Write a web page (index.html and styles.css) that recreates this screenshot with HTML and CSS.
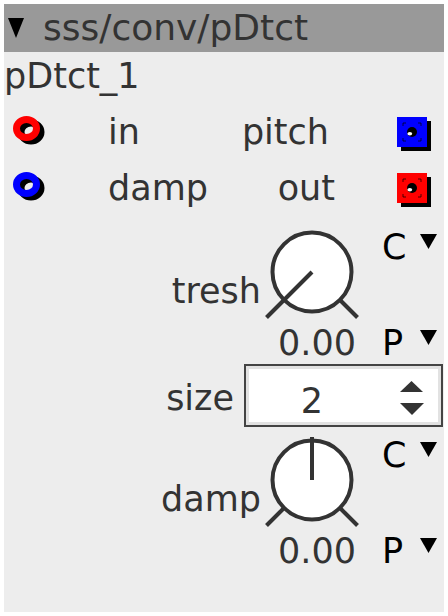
FILE: index.html
```html
<!DOCTYPE html>
<html lang="en">
  <head>
    <meta charset="UTF-8" />
    <title>sss/conv/pDtct</title>
    <link rel="stylesheet" href="styles.css">
  </head>
  <body>
    <div class="panel">
      <div class="header">
        <svg class="hdr-arrow" width="16" height="20" viewBox="0 0 16 20"><polygon points="0,0 16,0 8,20" /></svg>
        <span>sss/conv/pDtct</span>
      </div>
      <div class="title">pDtct_1</div>

      <div class="ports">
        <svg class="port-in" width="36" height="32" viewBox="0 0 36 32">
          <ellipse cx="18" cy="16" rx="10" ry="9" class="ring shadow" />
          <ellipse cx="13.5" cy="12.5" rx="10" ry="9" class="ring red" />
        </svg>
        <span class="lbl">in</span>
        <span class="lbl-r pitch">pitch</span>
        <svg class="port-out" width="36" height="36" viewBox="0 0 36 36">
          <rect x="4" y="4" width="30" height="30" fill="#000" />
          <rect x="0" y="0" width="30" height="30" fill="#00f" />
          <path class="corners" d="M6 9V6H9M21 6H24V9M24 21V24H21M9 24H6V21" />
          <circle cx="15" cy="15" r="5" fill="#000" />
          <ellipse cx="12.8" cy="16.8" rx="2.4" ry="1.8" fill="#fff" />
        </svg>

        <svg class="port-in" width="36" height="32" viewBox="0 0 36 32">
          <ellipse cx="18" cy="16" rx="10" ry="9" class="ring shadow" />
          <ellipse cx="13.5" cy="12.5" rx="10" ry="9" class="ring blue" />
        </svg>
        <span class="lbl">damp</span>
        <span class="lbl-r out">out</span>
        <svg class="port-out" width="36" height="36" viewBox="0 0 36 36">
          <rect x="4" y="4" width="30" height="30" fill="#000" />
          <rect x="0" y="0" width="30" height="30" fill="#f00" />
          <path class="corners" d="M6 9V6H9M21 6H24V9M24 21V24H21M9 24H6V21" />
          <circle cx="15" cy="15" r="5" fill="#000" />
          <ellipse cx="12.8" cy="16.8" rx="2.4" ry="1.8" fill="#fff" />
        </svg>
      </div>

      <div class="knob-group first">
        <span class="k-label">tresh</span>
        <svg class="knob" width="96" height="92" viewBox="0 0 96 92">
          <line x1="75.5" y1="71.5" x2="93.5" y2="89.5" />
          <circle cx="48" cy="44" r="39.5" />
          <line x1="48" y1="44" x2="2.5" y2="89.5" />
        </svg>
        <div class="menu top">C<svg width="17" height="15" viewBox="0 0 17 15"><polygon points="0,0 17,0 8.5,15" /></svg></div>
        <span class="k-value">0.00</span>
        <div class="menu bottom">P<svg width="17" height="15" viewBox="0 0 17 15"><polygon points="0,0 17,0 8.5,15" /></svg></div>
      </div>

      <div class="size-row">
        <span class="size-label">size</span>
        <div class="spin">
          <span class="spin-value">2</span>
          <svg class="spin-arrows" width="24" height="35" viewBox="0 0 24 35">
            <polygon points="11.5,0 23,11 0,11" />
            <polygon points="0,22 24,22 12,34" />
          </svg>
        </div>
      </div>

      <div class="knob-group">
        <span class="k-label">damp</span>
        <svg class="knob" width="96" height="92" viewBox="0 0 96 92">
          <line x1="75.5" y1="71.5" x2="93.5" y2="89.5" />
          <line x1="20.5" y1="71.5" x2="2.5" y2="89.5" />
          <circle cx="48" cy="44" r="39.5" />
          <line x1="48" y1="44" x2="48" y2="1" />
        </svg>
        <div class="menu top">C<svg width="17" height="15" viewBox="0 0 17 15"><polygon points="0,0 17,0 8.5,15" /></svg></div>
        <span class="k-value">0.00</span>
        <div class="menu bottom">P<svg width="17" height="15" viewBox="0 0 17 15"><polygon points="0,0 17,0 8.5,15" /></svg></div>
      </div>
    </div>
  </body>
</html>
```

FILE: styles.css
```css
body {
  margin: 0;
  padding: 4px;
  background: white;
  font-family: "DejaVu Sans", sans-serif;
  font-size: 35px;
  color: #333;
}
.panel {
  width: 440px;
  height: 608px;
  background: #ededed;
}
.header {
  height: 48px;
  line-height: 48px;
  padding-left: 4px;
  background: #999;
  font-size: 36px;
  display: flex;
  align-items: flex-start;
}
.hdr-arrow {
  margin-top: 14px;
  margin-right: 19px;
  fill: #000;
}
.title {
  height: 48px;
  line-height: 48px;
}
.ports {
  padding-top: 4px;
  display: grid;
  grid-template-columns: 104px 1fr auto 47px;
  grid-auto-rows: 56px;
  line-height: 56px;
}
.port-in {
  align-self: start;
  justify-self: start;
  margin: 12px 0 0 9px;
}
.port-out {
  align-self: start;
  justify-self: start;
  margin-top: 13px;
}
.ring {
  fill: none;
  stroke-width: 7;
}
.ring.shadow {
  stroke: #000;
}
.ring.red {
  stroke: #f00;
}
.ring.blue {
  stroke: #00f;
}
.corners {
  fill: none;
  stroke: #000;
  stroke-width: 1;
  opacity: 0.7;
}
.lbl-r {
  justify-self: end;
}
.lbl-r.pitch {
  margin-right: 68px;
}
.lbl-r.out {
  margin-right: 62px;
}
.knob-group {
  display: grid;
  grid-template-columns: 1fr 96px 84px;
  grid-template-rows: 92px 43px;
  line-height: 40px;
  margin-top: 9px;
}
.knob-group.first {
  margin-top: 12px;
}
.k-label {
  grid-column: 1;
  grid-row: 1;
  align-self: end;
  justify-self: end;
  margin: 0 3px 9px 0;
}
.knob {
  grid-column: 2;
  grid-row: 1;
  stroke: #333;
  stroke-width: 4;
  fill: #fff;
}
.k-value {
  grid-column: 2;
  grid-row: 2;
  justify-self: end;
  padding: 3px 4px 0 0;
}
.menu {
  grid-column: 3;
  display: flex;
  justify-content: space-between;
  align-items: flex-start;
  padding: 0 7px 0 22px;
  color: #000;
}
.menu svg {
  margin-top: 7px;
  fill: #000;
}
.menu.top {
  grid-row: 1;
  align-self: start;
  margin-top: -1px;
}
.menu.bottom {
  grid-row: 2;
  padding-top: 3px;
}
.size-row {
  display: flex;
  justify-content: flex-end;
  align-items: flex-start;
  gap: 10px;
  margin-top: 1px;
  padding-right: 1px;
  line-height: 40px;
}
.size-label {
  margin-top: 14px;
}
.spin {
  width: 199px;
  height: 63px;
  box-sizing: border-box;
  border: 2px solid #444;
  box-shadow: inset 0 0 0 3px #e2e2e2;
  background: #fff;
  display: flex;
  align-items: flex-start;
}
.spin-value {
  flex: 1;
  text-align: center;
  margin: 15px 22px 0 0;
}
.spin-arrows {
  fill: #333;
  margin: 15px 17px 0 0;
}
```
